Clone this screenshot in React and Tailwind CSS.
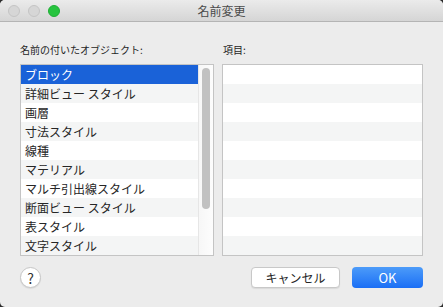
import React from "react";

const items = [
  "ブロック",
  "詳細ビュー スタイル",
  "画層",
  "寸法スタイル",
  "線種",
  "マテリアル",
  "マルチ引出線スタイル",
  "断面ビュー スタイル",
  "表スタイル",
  "文字スタイル",
];

export default function App() {
  return (
    <div className="w-[443px] h-[307px] bg-[#2b2b2b] font-['Noto_Sans_CJK_JP',sans-serif]">
      <div className="w-full h-full bg-[#ececec] rounded-[5px] overflow-hidden flex flex-col">
        {/* Title bar */}
        <div className="relative h-[22px] shrink-0 bg-gradient-to-b from-[#ebebeb] to-[#d5d5d5] border-b border-[#b4b4b4] flex items-center justify-center">
          <div className="absolute left-[8px] top-[5px] flex gap-[8px]">
            <span className="w-[12px] h-[12px] rounded-full bg-[#d6d6d6] border border-[#c4c4c4]" />
            <span className="w-[12px] h-[12px] rounded-full bg-[#d6d6d6] border border-[#c4c4c4]" />
            <span className="w-[12px] h-[12px] rounded-full bg-[#27c43f] border border-[#1fae35]" />
          </div>
          <span className="text-[12px] text-[#4a4a4a] leading-none">名前変更</span>
        </div>

        {/* Body */}
        <div className="px-[20px] flex flex-col">
          <div className="flex mt-[20px] h-[14px] items-center text-[10px] text-[#1f1f1f]">
            <div className="w-[194px]">名前の付いたオブジェクト:</div>
            <div className="ml-[9px]">項目:</div>
          </div>

          <div className="flex mt-[8px] gap-[8px]">
            {/* Left list */}
            <div className="w-[194px] h-[192px] border border-[#c4c4c4] bg-white flex">
              <div className="flex-1 flex flex-col">
                {items.map((t, i) => (
                  <div
                    key={t}
                    className={
                      i === 0
                        ? "h-[19px] pl-[4px] flex items-center text-[12px] text-white bg-[#1a62d8]"
                        : i % 2 === 1
                        ? "h-[19px] pl-[4px] flex items-center text-[12px] text-[#262626] bg-[#f4f5f5]"
                        : "h-[19px] pl-[4px] flex items-center text-[12px] text-[#262626] bg-white"
                    }
                  >
                    {t}
                  </div>
                ))}
              </div>
              <div className="w-[15px] border-l border-[#e6e6e6] bg-gradient-to-r from-[#f7f7f7] to-[#fdfdfd] pt-[3px] flex justify-center">
                <div className="w-[8px] h-[141px] rounded-full bg-[#c1c1c1]" />
              </div>
            </div>

            {/* Right list */}
            <div className="w-[201px] h-[192px] border border-[#c4c4c4] bg-white flex flex-col">
              {items.map((t, i) => (
                <div
                  key={t}
                  className={i % 2 === 1 ? "h-[19px] bg-[#f4f5f5]" : "h-[19px] bg-white"}
                />
              ))}
            </div>
          </div>

          {/* Buttons */}
          <div className="flex items-center mt-[11px] h-[21px]">
            <button className="w-[21px] h-[21px] rounded-full bg-white border border-[#c6c6c6] shadow-[0_1px_1px_rgba(0,0,0,0.08)] flex items-center justify-center text-[14px] text-[#333] leading-none">
              ?
            </button>
            <div className="flex-1" />
            <button className="w-[89px] h-[21px] rounded-[4px] bg-white border border-[#c8c8c8] shadow-[0_1px_1px_rgba(0,0,0,0.08)] text-[12px] text-[#262626] leading-none flex items-center justify-center">
              キャンセル
            </button>
            <button className="ml-[12px] w-[71px] h-[21px] rounded-[4px] bg-gradient-to-b from-[#4c9bf9] to-[#1a6ef5] text-[13px] text-white leading-none flex items-center justify-center">
              OK
            </button>
          </div>
        </div>
      </div>
    </div>
  );
}
